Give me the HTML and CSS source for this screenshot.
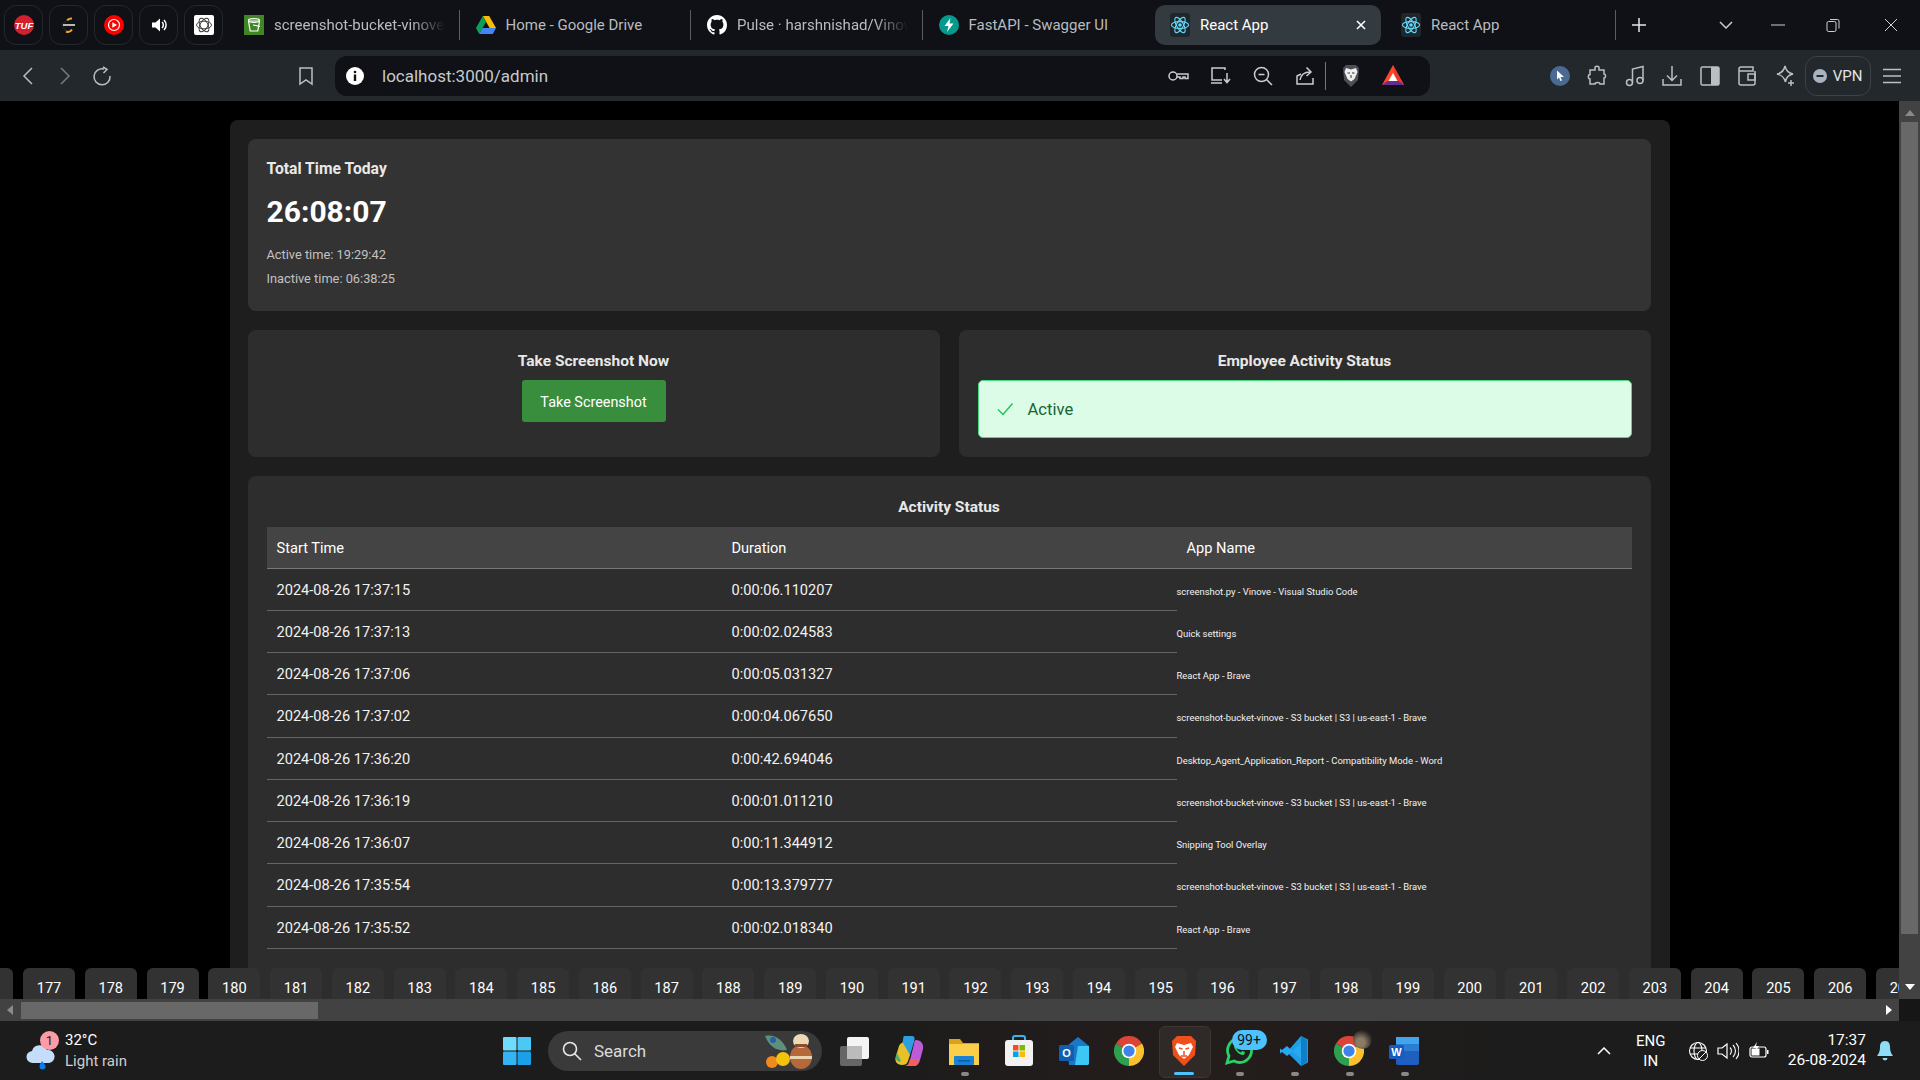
FILE: index.html
```html
<!DOCTYPE html>
<html lang="en">
<head>
<meta charset="utf-8">
<title>React App</title>
<link rel="stylesheet" href="styles.css">
</head>
<body>
<svg class="defs" aria-hidden="true">
  <symbol id="react" viewBox="0 0 20 24">
    <rect x="0" y="0" width="20" height="24" rx="3" fill="#20272c"/>
    <g fill="none" stroke="#61dafb" stroke-width="1.1">
      <ellipse cx="10" cy="12" rx="8.6" ry="3.4"/>
      <ellipse cx="10" cy="12" rx="8.6" ry="3.4" transform="rotate(60 10 12)"/>
      <ellipse cx="10" cy="12" rx="8.6" ry="3.4" transform="rotate(120 10 12)"/>
    </g>
    <circle cx="10" cy="12" r="1.8" fill="#61dafb"/>
  </symbol>
  <symbol id="chrome" viewBox="0 0 24 24">
    <path d="M12 12L1.6 6A12 12 0 0 1 22.4 6Z" fill="#db4437"/>
    <path d="M12 12L22.4 6A12 12 0 0 1 12 24Z" fill="#fbc02d"/>
    <path d="M12 12L12 24A12 12 0 0 1 1.6 6Z" fill="#2e9e4f"/>
    <circle cx="12" cy="12" r="5.8" fill="#fff"/>
    <circle cx="12" cy="12" r="4.5" fill="#3f83e8"/>
  </symbol>
</svg>

<div class="tabstrip">
  <div class="pinned-group">
    <div class="pinned">
      <svg width="20" height="20" viewBox="0 0 20 20"><circle cx="10" cy="10" r="10" fill="#d3202f"/><text x="10" y="13.500" class="tuf">TUF</text></svg>
    </div>
    <div class="pinned">
      <svg width="20" height="22" viewBox="0 0 20 22"><path d="M13 4.500A5 5 0 0 0 8 6.500" fill="none" stroke="#f5a623" stroke-width="2"/><path d="M7 17.500A5 5 0 0 0 13 15.500" fill="none" stroke="#f5a623" stroke-width="2"/><path d="M8 6.500L3 11L7 17.500" fill="none" stroke="#222" stroke-width="1.500"/><rect x="4" y="10" width="12" height="2" fill="#b8b8b8"/></svg>
    </div>
    <div class="pinned">
      <svg width="20" height="20" viewBox="0 0 20 20"><circle cx="10" cy="10" r="10" fill="#f00"/><circle cx="10" cy="10" r="5.500" fill="none" stroke="#fff" stroke-width="1.200"/><path d="M8.300 7.300L13 10L8.300 12.700Z" fill="#fff"/></svg>
    </div>
    <div class="pinned">
      <svg width="16" height="16" viewBox="0 0 16 16"><path d="M1 5.500H4.500L9 1.500V14.500L4.500 10.500H1Z" fill="#fff"/><path d="M11 5A4 4 0 0 1 11 11M13 3A7 7 0 0 1 13 13" fill="none" stroke="#fff" stroke-width="1.500"/></svg>
    </div>
    <div class="pinned">
      <svg width="20" height="20" viewBox="0 0 20 20"><rect width="20" height="20" rx="2" fill="#fff"/><g fill="none" stroke="#333" stroke-width=".9"><ellipse cx="10" cy="10" rx="7.500" ry="3.800"/><ellipse cx="10" cy="10" rx="7.500" ry="3.800" transform="rotate(60 10 10)"/><ellipse cx="10" cy="10" rx="7.500" ry="3.800" transform="rotate(120 10 10)"/></g></svg>
    </div>
  </div>

  <div class="tab">
    <svg class="favicon" width="20" height="20" viewBox="0 0 20 20"><rect width="20" height="20" fill="#3f8624"/><path d="M4.500 6H15.500L13.800 16H6.200Z" fill="none" stroke="#fff" stroke-width="1.200"/><ellipse cx="10" cy="5.500" rx="5.500" ry="1.800" fill="none" stroke="#fff" stroke-width="1.200"/><path d="M9 10L16 11.500" stroke="#fff" stroke-width="1.200"/></svg>
    <span class="tab-title">screenshot-bucket-vinove</span>
  </div>
  <div class="tab">
    <svg class="favicon" width="20" height="20" viewBox="0 0 20 18"><path d="M6.800 0H13.200L20 12H13.600Z" fill="#fbbc04"/><path d="M6.800 0L0 12L3.200 18L10 6Z" fill="#0f9d58"/><path d="M6.500 12H20L16.800 18H3.200Z" fill="#4285f4"/></svg>
    <span class="tab-title plain">Home - Google Drive</span>
  </div>
  <div class="tab">
    <svg class="favicon" width="20" height="20" viewBox="0 0 16 16"><path fill="#fff" d="M8 0C3.580 0 0 3.580 0 8c0 3.540 2.290 6.530 5.470 7.590.4.070.55-.17.55-.38 0-.19-.01-.82-.01-1.490-2.010.37-2.530-.49-2.690-.94-.09-.23-.48-.94-.82-1.130-.28-.15-.68-.52-.01-.53.63-.01 1.080.58 1.230.82.72 1.210 1.870.87 2.330.66.07-.52.28-.87.51-1.070-1.780-.2-3.640-.89-3.640-3.950 0-.87.31-1.590.82-2.150-.08-.2-.36-1.020.08-2.120 0 0 .67-.21 2.200.82.64-.18 1.320-.27 2-.27.68 0 1.360.09 2 .27 1.530-1.040 2.200-.82 2.200-.82.44 1.100.16 1.920.08 2.120.51.56.82 1.270.82 2.150 0 3.070-1.870 3.750-3.650 3.950.29.25.54.73.54 1.480 0 1.070-.01 1.930-.01 2.200 0 .21.15.46.55.38A8.013 8.013 0 0016 8c0-4.420-3.580-8-8-8z"/></svg>
    <span class="tab-title">Pulse · harshnishad/Vinove</span>
  </div>
  <div class="tab no-sep">
    <svg class="favicon" width="20" height="20" viewBox="0 0 20 20"><circle cx="10" cy="10" r="10" fill="#059a8c"/><path d="M11.500 3L5.500 11H9.500L8 17L14.500 8.500H10.500Z" fill="#fff"/></svg>
    <span class="tab-title plain">FastAPI - Swagger UI</span>
  </div>
  <div class="tab tab-active">
    <svg class="favicon" width="20" height="24"><use href="#react"/></svg>
    <span class="tab-title plain">React App</span>
    <svg class="tab-close" width="12" height="12" viewBox="0 0 12 12"><path d="M2 2L10 10M10 2L2 10" stroke="#fff" stroke-width="1.600"/></svg>
  </div>
  <div class="tab no-sep tab-last">
    <svg class="favicon" width="20" height="24"><use href="#react"/></svg>
    <span class="tab-title plain">React App</span>
  </div>
  <div class="strip-sep"></div>
  <svg class="newtab" width="14" height="14" viewBox="0 0 14 14"><path d="M7 0V14M0 7H14" stroke="#e6e6e6" stroke-width="1.500"/></svg>
  <svg class="chev" width="14" height="8" viewBox="0 0 14 8"><path d="M1 1L7 7L13 1" fill="none" stroke="#c8ccd0" stroke-width="1.500"/></svg>
  <svg class="win-min" width="14" height="2" viewBox="0 0 14 2"><path d="M0 1H14" stroke="#d0d0d0"/></svg>
  <svg class="win-max" width="14" height="14" viewBox="0 0 14 14"><rect x="1" y="3.500" width="9" height="10" rx="1.500" fill="none" stroke="#d0d0d0"/><path d="M4 1.500H11.500A1.500 1.500 0 0 1 13 3V10.500" fill="none" stroke="#d0d0d0"/></svg>
  <svg class="win-close" width="14" height="14" viewBox="0 0 14 14"><path d="M1 1L13 13M13 1L1 13" stroke="#d0d0d0"/></svg>
</div>

<div class="toolbar">
  <div class="tb-btn nav"><svg width="12" height="20" viewBox="0 0 12 20"><path d="M10 2L2 10L10 18" class="st"/></svg></div>
  <div class="tb-btn nav dim"><svg width="12" height="20" viewBox="0 0 12 20"><path d="M2 2L10 10L2 18" class="st"/></svg></div>
  <div class="tb-btn nav"><svg width="20" height="20" viewBox="0 0 20 20"><path d="M12 3A8 8 0 1 0 18 10" class="st"/><path d="M11 1L15 3.500L11.500 7" class="st"/></svg></div>
  <div class="tb-btn bookmark"><svg width="16" height="20" viewBox="0 0 16 20"><path d="M2 2H14V18L8 14L2 18Z" class="st"/></svg></div>
  <div class="urlbar">
    <svg class="info" width="18" height="18" viewBox="0 0 18 18"><circle cx="9" cy="9" r="9" fill="#fff"/><circle cx="9" cy="5" r="1.300" fill="#111"/><rect x="7.800" y="7.500" width="2.400" height="6.500" fill="#111"/></svg>
    <span class="url">localhost:3000/admin</span>
    <div class="url-tools">
      <div class="url-btn"><svg width="22" height="14" viewBox="0 0 22 14"><circle cx="5" cy="7" r="4" class="st2"/><path d="M9 5H20V9.500H17V8H15V9.500H12V8H9" class="st2"/></svg></div>
      <div class="url-btn"><svg width="22" height="20" viewBox="0 0 22 20"><path d="M15 4V2H2V14H12" class="st2"/><path d="M1 17H12M17 7V16M14 13L17 16.500L20 13" class="st2"/></svg></div>
      <div class="url-btn"><svg width="20" height="20" viewBox="0 0 20 20"><circle cx="8.500" cy="8.500" r="7" class="st2"/><path d="M13.500 13.500L19 19M5.500 8.500H11.500" class="st2"/></svg></div>
      <div class="url-btn"><svg width="20" height="22" viewBox="0 0 20 22"><path d="M18 13V19H2V11L6 9" class="st2"/><path d="M5 15C6 9 10 7 15 7M11.500 2.500L16 7L11.500 11" class="st2"/></svg></div>
      <div class="url-sep"></div>
      <div class="url-btn"><svg width="18" height="24" viewBox="0 0 18 24"><path d="M4 1H14L17 4L16 16L9 23L2 16L1 4Z" fill="#4b4f56"/><path d="M4 4L9 5.500L14 4L15.500 8L12.500 15L9 17.500L5.500 15L2.500 8Z" fill="#eee"/><path d="M5.500 9H8M10 9H12.500M9 11V14" stroke="#333"/></svg></div>
      <div class="url-btn"><svg width="22" height="22" viewBox="0 0 22 22"><path d="M11 0L22 20H0Z" fill="#ff4724"/><path d="M11 0L15 20H22Z" fill="#e8392a"/><path d="M0 20L5.500 16H16.500L22 20Z" fill="#662d91"/><path d="M11 8L15.500 16H6.500Z" fill="#fff"/></svg></div>
    </div>
  </div>
  <div class="ext-btn first">
    <svg width="20" height="20" viewBox="0 0 20 20"><circle cx="10" cy="10" r="10" fill="#4a6a94"/><path d="M7 4.500L14 11H10.500L12 14.500L10.500 15L9 11.500L7 13.500Z" fill="#fff"/></svg>
  </div>
  <div class="ext-btn"><svg width="20" height="22" viewBox="0 0 20 22"><path d="M8 2.500C8 .8 12 .8 12 2.500V5H17V9C19 9 19 13 17 13V19H13C13 17 8 17 8 19H3V14C.8 14 .8 9.500 3 9.500V5H8Z" class="st"/></svg></div>
  <div class="ext-btn"><svg width="20" height="22" viewBox="0 0 20 22"><circle cx="4.500" cy="17.500" r="3" class="st"/><circle cx="15" cy="15.500" r="3" class="st"/><path d="M7.500 17.500V4L18 1.500V15.500" class="st"/></svg></div>
  <div class="ext-btn"><svg width="20" height="22" viewBox="0 0 20 22"><path d="M10 1V15M5 10.500L10 15.500L15 10.500M1 14V20H19V14" class="st"/></svg></div>
  <div class="ext-btn"><svg width="20" height="20" viewBox="0 0 20 20"><rect x="1" y="1" width="18" height="18" rx="1.500" class="st"/><rect x="11" y="1" width="8" height="18" fill="#b8c0c6"/></svg></div>
  <div class="ext-btn"><svg width="20" height="20" viewBox="0 0 20 20"><path d="M4 1H16V5H2V3A2 2 0 0 1 4 1ZM2 5V17A2 2 0 0 0 4 19H16A2 2 0 0 0 18 17V5" class="st"/><rect x="11" y="8" width="7" height="6" class="st"/></svg></div>
  <div class="ext-btn"><svg width="20" height="22" viewBox="0 0 20 22"><path d="M10 1C11 6 13 8 18 9C13 10 11 12 10.500 17C9 12 7 10 2 9C7 8 9 6 10 1Z" class="st"/><path d="M16 15V21M13 18H19" class="st"/></svg></div>
  <div class="vpn-pill">
    <svg width="14" height="14" viewBox="0 0 14 14"><circle cx="7" cy="7" r="7" fill="#a9b3c0"/><rect x="3.500" y="6" width="7" height="2" fill="#23282c"/></svg>
    <span>VPN</span>
  </div>
  <div class="ext-btn menu"><svg width="20" height="16" viewBox="0 0 20 16"><path d="M1 1.500H19M1 8H19M1 14.500H19" class="st"/></svg></div>
</div>

<div class="viewport">
  <div class="page-col">
    <div class="scroller">
      <main class="container">
        <section class="card card-total">
          <h2 class="total-title">Total Time Today</h2>
          <div class="total-time">26:08:07</div>
          <p class="total-sub">Active time: 19:29:42</p>
          <p class="total-sub second">Inactive time: 06:38:25</p>
        </section>
        <div class="two-col">
          <section class="card card-center">
            <h3 class="card-title">Take Screenshot Now</h3>
            <button class="shot-btn" type="button">Take Screenshot</button>
          </section>
          <section class="card card-center">
            <h3 class="card-title">Employee Activity Status</h3>
            <div class="alert">
              <svg width="18" height="18" viewBox="0 0 18 18"><path d="M2 9.500L7 14.500L16.500 3.500" fill="none" stroke="#22c55e" stroke-width="1.500"/></svg>
              <span>Active</span>
            </div>
          </section>
        </div>
        <section class="card card-activity">
          <h3 class="card-title">Activity Status</h3>
          <table class="activity">
            <thead>
              <tr><th>Start Time</th><th>Duration</th><th>App Name</th></tr>
            </thead>
            <tbody>
              <tr><td>2024-08-26 17:37:15</td><td>0:00:06.110207</td><td class="app"><span>screenshot.py - Vinove - Visual Studio Code</span></td></tr>
              <tr><td>2024-08-26 17:37:13</td><td>0:00:02.024583</td><td class="app"><span>Quick settings</span></td></tr>
              <tr><td>2024-08-26 17:37:06</td><td>0:00:05.031327</td><td class="app"><span>React App - Brave</span></td></tr>
              <tr><td>2024-08-26 17:37:02</td><td>0:00:04.067650</td><td class="app"><span>screenshot-bucket-vinove - S3 bucket | S3 | us-east-1 - Brave</span></td></tr>
              <tr><td>2024-08-26 17:36:20</td><td>0:00:42.694046</td><td class="app"><span>Desktop_Agent_Application_Report - Compatibility Mode - Word</span></td></tr>
              <tr><td>2024-08-26 17:36:19</td><td>0:00:01.011210</td><td class="app"><span>screenshot-bucket-vinove - S3 bucket | S3 | us-east-1 - Brave</span></td></tr>
              <tr><td>2024-08-26 17:36:07</td><td>0:00:11.344912</td><td class="app"><span>Snipping Tool Overlay</span></td></tr>
              <tr><td>2024-08-26 17:35:54</td><td>0:00:13.379777</td><td class="app"><span>screenshot-bucket-vinove - S3 bucket | S3 | us-east-1 - Brave</span></td></tr>
              <tr><td>2024-08-26 17:35:52</td><td>0:00:02.018340</td><td class="app"><span>React App - Brave</span></td></tr>
            </tbody>
          </table>
        </section>
      </main>
    </div>
    <div class="pager">
      <span class="pg">176</span><span class="pg">177</span><span class="pg">178</span><span class="pg">179</span><span class="pg">180</span><span class="pg">181</span><span class="pg">182</span><span class="pg">183</span><span class="pg">184</span><span class="pg">185</span><span class="pg">186</span><span class="pg">187</span><span class="pg">188</span><span class="pg">189</span><span class="pg">190</span><span class="pg">191</span><span class="pg">192</span><span class="pg">193</span><span class="pg">194</span><span class="pg">195</span><span class="pg">196</span><span class="pg">197</span><span class="pg">198</span><span class="pg">199</span><span class="pg">200</span><span class="pg">201</span><span class="pg">202</span><span class="pg">203</span><span class="pg">204</span><span class="pg">205</span><span class="pg">206</span><span class="pg">207</span>
    </div>
    <div class="hscroll">
      <svg class="arrow" width="6" height="10" viewBox="0 0 6 10"><path d="M6 0V10L0 5Z" fill="#8a8a8a"/></svg>
      <div class="hthumb"></div>
      <svg class="arrow arrow-end" width="6" height="10" viewBox="0 0 6 10"><path d="M0 0V10L6 5Z" fill="#fff"/></svg>
    </div>
  </div>
  <div class="vscroll">
    <svg class="varrow" width="10" height="6" viewBox="0 0 10 6"><path d="M0 6H10L5 0Z" fill="#8a8a8a"/></svg>
    <div class="vthumb"></div>
    <svg class="varrow down" width="10" height="6" viewBox="0 0 10 6"><path d="M0 0H10L5 6Z" fill="#fff"/></svg>
    <div class="corner"></div>
  </div>
</div>

<footer class="taskbar">
  <div class="weather">
    <div class="weather-icon">
      <svg width="30" height="32" viewBox="0 0 30 32"><path d="M8 24A6 6 0 0 1 7 12A8 8 0 0 1 22 11A6.500 6.500 0 0 1 24 24Z" fill="#c5dcfb"/><path d="M17 22C15 25 14.500 26 14.500 27.500A3 3 0 0 0 20.500 27.500C20.500 26 19 24.500 17 22Z" fill="#0f7be8"/></svg>
      <span class="weather-badge">1</span>
    </div>
    <div class="weather-text">
      <div class="temp">32°C</div>
      <div class="cond">Light rain</div>
    </div>
  </div>
  <svg class="winlogo" width="28" height="28" viewBox="0 0 28 28"><rect width="13.500" height="13.500" rx="1" fill="#6fdcfb"/><rect x="14.500" width="13.500" height="13.500" rx="1" fill="#4cc8f7"/><rect y="14.500" width="13.500" height="13.500" rx="1" fill="#34b4f2"/><rect x="14.500" y="14.500" width="13.500" height="13.500" rx="1" fill="#1a9fe8"/></svg>
  <div class="search">
    <svg width="20" height="20" viewBox="0 0 20 20"><circle cx="8" cy="8" r="6.500" fill="none" stroke="#e8e8e8" stroke-width="1.600"/><path d="M12.500 12.500L19 19" stroke="#e8e8e8" stroke-width="1.600"/></svg>
    <span class="search-text">Search</span>
    <svg class="doodle" width="52" height="38" viewBox="0 0 52 38"><path d="M2 4C12 2 20 8 24 18C14 20 6 14 2 4Z" fill="#5d8f7b"/><circle cx="10" cy="8" r="3" fill="#2a5fa8"/><circle cx="9" cy="30" r="6" fill="#f08a1d"/><circle cx="20" cy="27" r="7" fill="#f4c20d"/><ellipse cx="38" cy="25" rx="11" ry="12" fill="#b5683b"/><path d="M27 24H49V27H27Z" fill="#e8d5b0"/><ellipse cx="38" cy="9" rx="8" ry="7" fill="#ecd9b5"/><rect x="32" y="12" width="12" height="3" fill="#8c4d2b"/></svg>
  </div>
  <div class="apps">
    <div class="app-slot">
      <svg width="30" height="30" viewBox="0 0 30 30"><rect x="1" y="10" width="22" height="20" rx="2" fill="#666"/><rect x="8" y="1" width="22" height="22" rx="2" fill="#f4f4f4"/><rect x="8" y="10" width="15" height="13" fill="#bbb"/></svg>
    </div>
    <div class="app-slot">
      <svg width="30" height="32" viewBox="0 0 30 32"><path d="M10 1H18C21 1 21 4 20 7L16 20H5L9 5C9.300 3 9.500 1 10 1Z" fill="#2d9fe0"/><path d="M9 8L16 20L14 26C13 29 11 30 8 30C3 30 0 26 2 21L5 11C6 9 8 7 9 8Z" fill="#e8c02a"/><path d="M3 18L7 26C5 28 1 25 2 21Z" fill="#4caf6a"/><path d="M22 5C27 5 30 9 29 14L26 25C25 29 23 31 20 31H11C14 31 15 28 16 25L20 9C20.500 6 21 5 22 5Z" fill="#c05bd8"/><path d="M20 31H11C14 31 15 28 16 24L25 24C24 29 23 31 20 31Z" fill="#f0615d"/></svg>
    </div>
    <div class="app-slot dot">
      <svg width="30" height="30" viewBox="0 0 30 30"><path d="M0 3H11L14 7H30V29H0Z" fill="#d9a21b"/><rect y="8" width="30" height="21" fill="#fbcf49"/><rect x="5" y="20" width="20" height="9" rx="1" fill="#1a82d4"/><rect x="9" y="24" width="12" height="1.600" fill="#0c5ea6"/></svg>
    </div>
    <div class="app-slot">
      <svg width="30" height="32" viewBox="0 0 30 32"><path d="M9 7V3A2 2 0 0 1 11 1H19A2 2 0 0 1 21 3V7" fill="none" stroke="#35b5ea" stroke-width="2"/><rect x="1" y="5" width="28" height="26" rx="3" fill="#f2f2f2"/><rect x="9" y="10" width="5.500" height="5.500" fill="#f25022"/><rect x="15.500" y="10" width="5.500" height="5.500" fill="#7fba00"/><rect x="9" y="16.500" width="5.500" height="5.500" fill="#00a4ef"/><rect x="15.500" y="16.500" width="5.500" height="5.500" fill="#ffb900"/></svg>
    </div>
    <div class="app-slot">
      <svg width="30" height="30" viewBox="0 0 30 30"><path d="M8 10L19 1L30 10V27A2 2 0 0 1 28 29H10Z" fill="#1c78c6"/><path d="M19 10H30V27A2 2 0 0 1 28 29H16Z" fill="#3cc7f5"/><rect y="9" width="15" height="16" rx="1.500" fill="#0f5fb0"/><text x="7.500" y="21" class="ol">O</text></svg>
    </div>
    <div class="app-slot">
      <svg width="30" height="30"><use href="#chrome"/></svg>
    </div>
    <div class="app-slot app-active">
      <svg width="26" height="32" viewBox="0 0 26 32"><path d="M6 1H20L25 6L24 20L13 31L2 20L1 6Z" fill="#f04e1b"/><path d="M6 8L13 10L20 8L22 12L18 20L13 24L8 20L4 12Z" fill="#fff"/><path d="M8 13L11.500 14M18 13L14.500 14M13 16V20M10 21H16" stroke="#f04e1b" stroke-width="1.500"/></svg>
    </div>
    <div class="app-slot dot">
      <svg width="30" height="30" viewBox="0 0 30 30"><path d="M3 27L5 20A12 12 0 1 1 10 25Z" fill="none" stroke="#25d366" stroke-width="2.800"/><path d="M10 9C9 12 15 20 20 19L21 16L18 15L17 16.500C15 16 13 14 12.500 12L14 11L13 8Z" fill="#25d366"/></svg>
      <span class="wa-badge">99+</span>
    </div>
    <div class="app-slot dot">
      <svg width="30" height="32" viewBox="0 0 30 32"><path d="M22 1L29 4.500V27.500L22 31L8 17Z" fill="#1e9fe8"/><path d="M22 1L22 31L28 27V5Z" fill="#0f7fc8"/><path d="M22 8L8 21L3 17L1 18.500V13.500L3 15L8 11L22 24Z" fill="#2aa8ee"/></svg>
    </div>
    <div class="app-slot dot">
      <svg width="30" height="30"><use href="#chrome"/></svg>
      <span class="avatar"></span>
    </div>
    <div class="app-slot dot">
      <svg width="30" height="30" viewBox="0 0 30 30"><rect x="7" y="1" width="23" height="28" rx="2" fill="#1f5fbf"/><rect x="7" y="1" width="23" height="7" fill="#41a5ee"/><rect x="7" y="8" width="23" height="7" fill="#2b7cd3"/><rect y="9" width="15" height="14" rx="1.500" fill="#185abd"/><text x="7.500" y="20" class="ol">W</text></svg>
    </div>
  </div>
  <div class="tray">
    <svg class="tray-chev" width="14" height="8" viewBox="0 0 14 8"><path d="M1 7L7 1L13 7" fill="none" stroke="#fff" stroke-width="1.500"/></svg>
    <div class="lang"><div>ENG</div><div>IN</div></div>
    <svg class="t-globe" width="20" height="20" viewBox="0 0 20 20"><g fill="none" stroke="#fff" stroke-width="1.100"><circle cx="10" cy="10" r="8.500"/><ellipse cx="10" cy="10" rx="4" ry="8.500"/><path d="M2 7H18M2 13H18"/></g><circle cx="14.500" cy="14.500" r="5" fill="#1c1c1c" stroke="#fff"/><path d="M11 18L18 11" stroke="#fff"/></svg>
    <svg class="t-vol" width="22" height="20" viewBox="0 0 22 20"><path d="M1 7H5L10 3V17L5 13H1Z" fill="none" stroke="#fff" stroke-width="1.200"/><path d="M13 6.500A5 5 0 0 1 13 13.500M16 4A8.500 8.500 0 0 1 16 16M19 2A12 12 0 0 1 19 18" fill="none" stroke="#fff" stroke-width="1.100"/></svg>
    <svg class="t-bat" width="20" height="18" viewBox="0 0 20 18"><rect x="1" y="5" width="16" height="10" rx="2" fill="none" stroke="#fff" stroke-width="1.200"/><rect x="2.500" y="6.500" width="8" height="7" fill="#fff"/><rect x="18" y="8" width="1.500" height="4" fill="#fff"/><path d="M8 0L4 6H7L6 10L10 4H7Z" fill="#fff"/></svg>
    <div class="clock"><div>17:37</div><div>26-08-2024</div></div>
    <svg class="bell" width="18" height="22" viewBox="0 0 18 22"><path d="M9 1C5 1 4 4 4 7C4 11 3 13 1 16H17C15 13 14 11 14 7C14 4 13 1 9 1Z" fill="#8fdcf5"/><path d="M6.500 18A2.500 2.500 0 0 0 11.500 18Z" fill="#8fdcf5"/></svg>
  </div>
</footer>
</body>
</html>
```

FILE: styles.css
```css
* { box-sizing: border-box; }
html, body { height: 100%; }
body {
  margin: 0;
  height: 1080px;
  overflow: hidden;
  display: flex;
  flex-direction: column;
  background: #000;
  color: #fff;
  font-family: Roboto, "Open Sans", "Liberation Sans", sans-serif;
}
.defs { position: absolute; width: 0; height: 0; }
.st { fill: none; stroke: #b8c0c6; stroke-width: 1.500; }
.st2 { fill: none; stroke: #c9cdd1; stroke-width: 1.500; }

/* tab strip */
.tabstrip {
  flex: none;
  height: 50px;
  display: flex;
  align-items: center;
  background: #0f1116;
  padding-left: 4px;
}
.pinned-group { display: flex; gap: 6px; margin-right: 9px; }
.pinned {
  width: 39px;
  height: 40px;
  border: 1px solid #24272c;
  border-radius: 12px;
  display: flex;
  align-items: center;
  justify-content: center;
}
.tuf { font: italic 700 9.500px "Liberation Sans", sans-serif; fill: #fff; text-anchor: middle; }
.tab {
  flex: none;
  width: 227.500px;
  height: 30px;
  margin-right: 4px;
  padding: 0 14px 0 12px;
  display: flex;
  align-items: center;
  border-right: 1px solid #5a5e63;
  font-size: 15px;
  color: #b9bcbf;
}
.no-sep { border-right-color: transparent; }
.favicon { flex: none; margin-right: 10px; }
.tab-title {
  flex: 1;
  min-width: 0;
  white-space: nowrap;
  overflow: hidden;
  -webkit-mask-image: linear-gradient(to right, #000 80%, transparent 100%);
  mask-image: linear-gradient(to right, #000 80%, transparent 100%);
}
.tab-title.plain { -webkit-mask-image: none; mask-image: none; }
.tab-active {
  width: 226px;
  height: 40px;
  margin-left: -3px;
  margin-right: 8px;
  padding-left: 15px;
  border-right: 0;
  border-radius: 10px;
  background: #343b40;
  color: #fff;
}
.tab-close { flex: none; margin-right: 0; }
.tab-last { width: 180px; margin-right: 46px; }
.strip-sep { width: 1px; height: 30px; background: #5a5e63; }
.newtab { margin-left: 16px; }
.chev { margin-left: 73px; }
.win-min { margin-left: 38px; }
.win-max { margin-left: 41px; }
.win-close { margin-left: 44px; }

/* toolbar */
.toolbar {
  flex: none;
  height: 51px;
  display: flex;
  align-items: center;
  background: #23282c;
  padding-left: 9px;
}
.tb-btn { width: 37px; height: 40px; display: flex; align-items: center; justify-content: center; }
.dim { opacity: .55; }
.bookmark { margin-left: 167px; margin-right: 11px; }
.urlbar {
  flex: none;
  width: 1095px;
  height: 40px;
  border-radius: 12px;
  background: #0f1116;
  display: flex;
  align-items: center;
  padding: 0 16px 0 11px;
}
.info { flex: none; }
.url { margin-left: 18px; font-size: 17px; color: #c6cacd; }
.url-tools { margin-left: auto; display: flex; align-items: center; }
.url-btn { width: 42px; display: flex; justify-content: center; align-items: center; }
.url-sep { width: 1px; height: 28px; margin: 0 4px 0 -1px; background: #70757a; }
.ext-btn { flex: none; width: 37.500px; height: 40px; display: flex; align-items: center; justify-content: center; }
.ext-btn.first { margin-left: 111px; }
.ext-btn.menu { width: 37px; margin-left: 3px; }
.vpn-pill {
  flex: none;
  width: 66px;
  height: 40px;
  margin-left: 1px;
  border: 1px solid #3c4247;
  border-radius: 12px;
  display: flex;
  align-items: center;
  justify-content: center;
  gap: 6px;
  font-size: 15px;
  color: #e2e5e7;
}

/* viewport */
.viewport { flex: 1; min-height: 0; display: flex; }
.page-col { flex: 1; min-width: 0; display: flex; flex-direction: column; position: relative; }
.scroller { flex: 1; min-height: 0; overflow: hidden; background: #000; }
.container {
  width: 1440px;
  margin: 19px auto 0;
  padding: 19px 19px 60px 18px;
  background: #1e1e1e;
  border-radius: 8px;
  display: flex;
  flex-direction: column;
  gap: 19px;
}
.card { background: #2d2d2d; border-radius: 8px; padding: 19px; }
.card-total { background: #333; height: 172px; }
.total-title { margin: 0; font-size: 15.700px; line-height: 22px; font-weight: 700; color: #e8e8e8; }
.total-time { margin-top: 13px; font-size: 30px; line-height: 38px; font-weight: 700; }
.total-sub { margin: 15px 0 0; font-size: 12.800px; line-height: 18px; color: #c2c2c2; }
.total-sub.second { margin-top: 6px; }
.two-col { display: grid; grid-template-columns: 1fr 1fr; gap: 19px; }
.card-center { height: 127px; display: flex; flex-direction: column; align-items: center; }
.card-title { margin: 0 0 7px; font-size: 15.500px; line-height: 24px; font-weight: 700; color: #e8e8e8; text-align: center; }
.shot-btn {
  width: 144px;
  height: 42px;
  padding: 2px 0 0;
  border: 0;
  border-radius: 3px;
  background: #388e3c;
  color: #fff;
  font: 14.400px Roboto, sans-serif;
}
.alert {
  align-self: stretch;
  height: 59px;
  padding-left: 17px;
  display: flex;
  align-items: center;
  gap: 14px;
  background: #dcfce7;
  border: 1px solid #4ade80;
  border-radius: 5px;
  color: #166534;
  font-size: 16.600px;
}
.card-activity { min-height: 540px; }
.card-activity .card-title { margin-bottom: 8px; }
.activity { width: 100%; border-collapse: collapse; table-layout: fixed; font-size: 14.600px; }
.activity th {
  height: 41px;
  padding: 2px 10px 0;
  background: #444;
  border-bottom: 1px solid #777;
  font-weight: 400;
  text-align: left;
}
.activity td {
  height: 42.250px;
  padding: 1px 10px 0;
  border-bottom: 1px solid #666;
  color: #f2f2f2;
}
.activity td.app { padding: 5px 0 0; border-bottom: 0; font-size: 9.450px; line-height: 14px; }

/* pager */
.pager {
  position: absolute;
  left: 0;
  right: 0;
  bottom: 22px;
  height: 31px;
  display: flex;
  gap: 9.770px;
  overflow: hidden;
}
.pg {
  flex: none;
  width: 52px;
  height: 31px;
  padding-top: 11px;
  line-height: 18px;
  font-size: 14.600px;
  text-align: center;
  background: #323232;
  border-radius: 6px 6px 0 0;
}
.pg:first-child { margin-left: -38.770px; }

/* scrollbars */
.hscroll {
  flex: none;
  height: 22px;
  background: #424242;
  display: flex;
  align-items: center;
  padding: 0 7px;
}
.arrow { flex: none; }
.hthumb { flex: none; width: 297px; height: 17px; margin-left: 8px; background: #686868; }
.arrow-end { margin-left: auto; }
.vscroll { flex: none; width: 21px; background: #424242; display: flex; flex-direction: column; align-items: center; }
.varrow { flex: none; margin-top: 9px; }
.vthumb { flex: none; width: 17px; height: 812px; margin-top: 6px; background: #686868; }
.varrow.down { margin-top: 50px; }
.corner { flex: none; width: 21px; height: 22px; margin-top: auto; background: #161616; }

/* taskbar */
.taskbar {
  flex: none;
  height: 59px;
  display: flex;
  align-items: center;
  background: linear-gradient(to right, #1c1c1c 45%, #241d1b 62%, #1c1c1c 80%);
  font-size: 15px;
}
.weather { flex: none; width: 503px; padding-left: 25px; display: flex; align-items: center; }
.weather-icon { width: 30px; height: 40px; position: relative; display: flex; align-items: flex-end; }
.weather-badge {
  position: absolute;
  left: 15px;
  top: 0;
  width: 19px;
  height: 19px;
  border-radius: 50%;
  background: #ff9ba5;
  color: #222;
  font-size: 13px;
  line-height: 19px;
  text-align: center;
}
.weather-text { margin-left: 10px; line-height: 21px; }
.temp { color: #fff; }
.cond { color: #cfcfcf; }
.winlogo { flex: none; }
.search {
  flex: none;
  width: 274px;
  height: 40px;
  margin-left: 17px;
  padding: 0 7px 0 14px;
  display: flex;
  align-items: center;
  border-radius: 20px;
  background: #3a3a3a;
  font-size: 17px;
  color: #dcdcdc;
}
.search-text { margin-left: 12px; }
.doodle { margin-left: auto; }
.apps { flex: none; margin-left: 4.500px; display: flex; }
.app-slot {
  flex: none;
  width: 55px;
  height: 50px;
  display: flex;
  align-items: center;
  justify-content: center;
  position: relative;
}
.app-slot.dot::after {
  content: "";
  position: absolute;
  left: 24px;
  bottom: 0;
  width: 8px;
  height: 4px;
  border-radius: 2px;
  background: #888;
}
.app-active::before {
  content: "";
  position: absolute;
  left: 2.500px;
  top: 0;
  width: 50px;
  height: 50px;
  border-radius: 6px;
  background: #2f2927;
  border: 1px solid #3a3634;
}
.app-active svg { position: relative; }
.app-active::after {
  content: "";
  position: absolute;
  left: 17.500px;
  bottom: 1px;
  width: 20px;
  height: 3px;
  border-radius: 2px;
  background: #4cc2ff;
}
.wa-badge {
  position: absolute;
  left: 20px;
  top: 4px;
  width: 35px;
  height: 20px;
  border-radius: 10px;
  background: #4cc2ff;
  color: #111;
  font-size: 14px;
  line-height: 20px;
  text-align: center;
}
.avatar {
  position: absolute;
  left: 31px;
  top: 4px;
  width: 19px;
  height: 19px;
  border-radius: 50%;
  background: radial-gradient(circle at 40% 65%, #8a7a66 0 25%, #2a2522 70%);
}
.ol { font: 700 11px "Liberation Sans", sans-serif; fill: #fff; text-anchor: middle; }
.tray { flex: 1; display: flex; align-items: center; justify-content: flex-end; padding-right: 26px; color: #fff; }
.lang { margin-left: 20px; width: 40px; text-align: center; line-height: 20px; font-size: 15px; }
.t-globe { margin-left: 17px; }
.t-vol { margin-left: 9px; }
.t-bat { margin-left: 10px; }
.clock { margin-left: 19px; text-align: right; line-height: 19.500px; font-size: 15.500px; }
.bell { margin-left: 10px; }
```
